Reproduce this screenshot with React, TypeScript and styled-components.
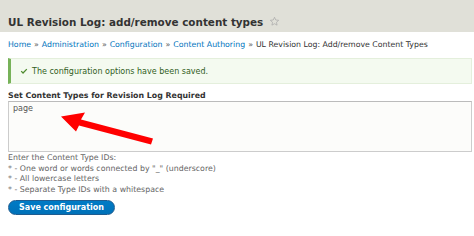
import React from "react";
import styled, { createGlobalStyle } from "styled-components";

const GlobalStyle = createGlobalStyle`
  html, body {
    margin: 0;
    padding: 0;
    background: #fff;
    font-family: "DejaVu Sans", Verdana, sans-serif;
  }
`;

const crumbs = ["Home", "Administration", "Configuration", "Content Authoring"];

const hints = [
  "Enter the Content Type IDs:",
  '* - One word or words connected by "_" (underscore)',
  "* - All lowercase letters",
  "* - Separate Type IDs with a whitespace",
];

const App = () => {
  return (
    <>
      <GlobalStyle />
      <Page>
        <Header>
          <Title>UL Revision Log: add/remove content types</Title>
          <Star viewBox="0 0 24 24">
            <path d="M12 2.8l2.7 5.9 6.4.7-4.8 4.3 1.3 6.3L12 16.8 6.4 20l1.3-6.3-4.8-4.3 6.4-.7z" />
          </Star>
        </Header>
        <Content>
          <Breadcrumb>
            {crumbs.map((c) => (
              <React.Fragment key={c}>
                <Crumb href="#">{c}</Crumb>
                <Sep>»</Sep>
              </React.Fragment>
            ))}
            <span>UL Revision Log: Add/remove Content Types</span>
          </Breadcrumb>
          <Message>
            <Check viewBox="0 0 10 10">
              <path d="M1.5 5.2l2.3 2.3 4.7-4.8" />
            </Check>
            The configuration options have been saved.
          </Message>
          <Field>
            <Label>Set Content Types for Revision Log Required</Label>
            <TextArea defaultValue="page" />
            <Arrow viewBox="0 0 100 30">
              <path d="M0 3 L24 -1 L20 6 L92 25 L90 31 L18 12 L15 18 Z" />
            </Arrow>
          </Field>
          <Hints>
            {hints.map((h) => (
              <div key={h}>{h}</div>
            ))}
          </Hints>
          <Button>Save configuration</Button>
        </Content>
      </Page>
    </>
  );
};

const Page = styled.div`
  width: 474px;
  height: 236px;
  overflow: hidden;
  background: #fff;
`;

const Header = styled.div`
  height: 32px;
  box-sizing: border-box;
  background: #e0e0d8;
  padding: 0 0 2px 8px;
  display: flex;
  align-items: flex-end;
  gap: 6px;
`;

const Title = styled.h1`
  margin: 0;
  font-size: 10.4px;
  font-weight: bold;
  color: #333;
  line-height: 16px;
`;

const Star = styled.svg`
  width: 11px;
  height: 11px;
  margin-bottom: 3px;
  fill: none;
  stroke: #aaa;
  stroke-width: 1.6;
  stroke-linejoin: round;
`;

const Content = styled.div`
  padding: 0 2px 0 8px;
`;

const Breadcrumb = styled.div`
  font-size: 7.8px;
  line-height: 10px;
  color: #333;
  padding: 8px 0 0;
`;

const Crumb = styled.a`
  color: #0074bd;
  text-decoration: none;
`;

const Sep = styled.span`
  margin: 0 3px;
  color: #666;
`;

const Message = styled.div`
  margin-top: 8px;
  height: 26px;
  box-sizing: border-box;
  display: flex;
  align-items: center;
  gap: 4px;
  padding-left: 9px;
  background: #f4faf0;
  border: 1px solid #e4efdc;
  border-left: 3px solid #77b259;
  font-size: 8px;
  color: #325e1c;
`;

const Check = styled.svg`
  width: 8px;
  height: 8px;
  fill: none;
  stroke: #4e8a2e;
  stroke-width: 1.6;
`;

const Field = styled.div`
  position: relative;
  margin-top: 7px;
`;

const Label = styled.div`
  font-size: 7.85px;
  font-weight: bold;
  color: #333;
  line-height: 10px;
`;

const TextArea = styled.textarea`
  display: block;
  width: 100%;
  height: 51px;
  box-sizing: border-box;
  margin-top: 0;
  padding: 2px 4px;
  resize: none;
  border: 1px solid #ccc;
  border-top-color: #bbb;
  background: #fcfcfa;
  font-family: "DejaVu Sans", Verdana, sans-serif;
  font-size: 8px;
  color: #555;
  outline: none;
`;

const Arrow = styled.svg`
  position: absolute;
  left: 53px;
  top: 22px;
  width: 100px;
  height: 31px;
  fill: #f00;
  overflow: visible;
`;

const Hints = styled.div`
  margin-top: 1px;
  font-size: 7.85px;
  line-height: 10.5px;
  color: #666;
`;

const Button = styled.button`
  margin-top: 4px;
  height: 15px;
  padding: 0 10px;
  border-radius: 8px;
  border: 1px solid #1e5c90;
  background: linear-gradient(#007bc6, #0071b8);
  color: #fff;
  font-family: "DejaVu Sans", Verdana, sans-serif;
  font-size: 8px;
  font-weight: bold;
  line-height: 13px;
`;

export default App;
